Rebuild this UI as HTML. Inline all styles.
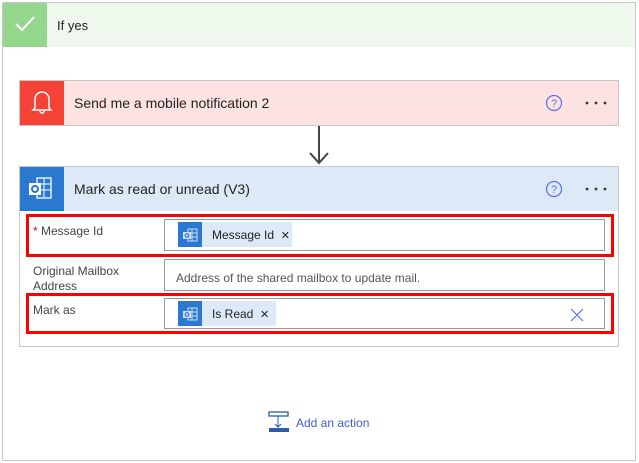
<!DOCTYPE html><html><head><style>
body{margin:0;width:639px;height:463px;background:#fff;font-family:"Liberation Sans",sans-serif;position:relative;overflow:hidden}
.a{position:absolute;box-sizing:border-box}
.t{font-size:13px;color:#222}
</style></head><body>
<div class="a" style="left:2px;top:2px;width:634px;height:459px;border:1px solid #c8c8c8"></div>
<div class="a" style="left:3px;top:3px;width:632px;height:44px;background:#eef8ec"></div>
<div class="a" style="left:3px;top:3px;width:44px;height:44px;background:#92d78c"></div>
<svg class="a" style="left:14px;top:14px" width="22" height="20"><path d="M2 10 L8 16 L20 3" stroke="#fff" stroke-width="2" fill="none"/></svg>
<div class="a t" style="left:57px;top:18px">If yes</div>

<div class="a" style="left:19px;top:80px;width:600px;height:46px;background:#fde2e2;border:1px solid #c8c8c8"></div>
<div class="a" style="left:20px;top:81px;width:44px;height:44px;background:#f44336"></div>
<svg class="a" style="left:30px;top:88px" width="24" height="30"><path d="M5 20 V11 a7 7 0 0 1 14 0 V20 L21 22 H3 Z" stroke="#fff" stroke-width="1.5" fill="none"/><path d="M10 23 a2 2 0 0 0 4 0" stroke="#fff" stroke-width="1.5" fill="none"/></svg>
<div class="a t" style="left:74px;top:95px;font-size:14px">Send me a mobile notification 2</div>
<svg class="a" style="left:545px;top:94px" width="18" height="18"><circle cx="9" cy="9" r="7.5" stroke="#5c6ef0" fill="none" stroke-width="1.2"/><text x="9" y="13" font-size="11" text-anchor="middle" fill="#5c6ef0" font-family="Liberation Sans">?</text></svg>
<svg class="a" style="left:585px;top:101px" width="24" height="4"><circle cx="2" cy="2" r="1.4" fill="#333"/><circle cx="11" cy="2" r="1.4" fill="#333"/><circle cx="20" cy="2" r="1.4" fill="#333"/></svg>

<div class="a" style="left:318px;top:126px;width:2px;height:36px;background:#444"></div>
<svg class="a" style="left:309px;top:152px" width="20" height="14"><path d="M1 1 L10 11 L19 1" stroke="#444" stroke-width="2" fill="none"/></svg>

<div class="a" style="left:19px;top:166px;width:600px;height:181px;border:1px solid #c8c8c8"></div>
<div class="a" style="left:20px;top:167px;width:598px;height:44px;background:#dde9f6"></div>
<div class="a" style="left:20px;top:167px;width:44px;height:44px;background:#2b78d1"></div>
<svg class="a" style="left:26px;top:174px" width="30" height="30"><rect x="11" y="4" width="14" height="20" fill="none" stroke="#fff" stroke-width="1.3"/><path d="M11 10H25M11 16H25M18 4V24" stroke="#fff"/><rect x="3" y="9" width="12" height="12" fill="#fff"/><circle cx="9" cy="15" r="3" fill="none" stroke="#2b78d1" stroke-width="2"/></svg>
<div class="a t" style="left:74px;top:181px;font-size:14px">Mark as read or unread (V3)</div>
<svg class="a" style="left:545px;top:180px" width="18" height="18"><circle cx="9" cy="9" r="7.5" stroke="#5c6ef0" fill="none" stroke-width="1.2"/><text x="9" y="13" font-size="11" text-anchor="middle" fill="#5c6ef0" font-family="Liberation Sans">?</text></svg>
<svg class="a" style="left:585px;top:187px" width="24" height="4"><circle cx="2" cy="2" r="1.4" fill="#333"/><circle cx="11" cy="2" r="1.4" fill="#333"/><circle cx="20" cy="2" r="1.4" fill="#333"/></svg>

<div class="a" style="left:26px;top:214px;width:588px;height:43px;border:3px solid #f00"></div>
<div class="a" style="left:26px;top:293px;width:588px;height:41px;border:3px solid #f00"></div>
<div class="a" style="left:33px;top:224px;font-size:12px;color:#444"><span style="color:#d00">*</span> Message Id</div>
<div class="a" style="left:33px;top:264px;font-size:12px;color:#444;line-height:15px">Original Mailbox<br>Address</div>
<div class="a" style="left:33px;top:303px;font-size:12px;color:#444">Mark as</div>

<div class="a" style="left:164px;top:219px;width:441px;height:32px;border:1px solid #999"></div>
<div class="a" style="left:164px;top:259px;width:441px;height:32px;border:1px solid #999"></div>
<div class="a" style="left:164px;top:298px;width:441px;height:31px;border:1px solid #999"></div>

<div class="a" style="left:178px;top:222px;width:114px;height:25px;background:#dde9f6"></div>
<div class="a" style="left:178px;top:222px;width:24px;height:25px;background:#2b78d1"></div>
<svg class="a" style="left:181px;top:226px" width="18" height="18"><rect x="7" y="3" width="9" height="12" fill="none" stroke="#cfe0f7"/><path d="M7 7H16M7 11H16M11 3V15" stroke="#cfe0f7"/><rect x="2" y="6" width="8" height="7" fill="#cfe0f7"/><circle cx="6" cy="9.5" r="1.8" fill="none" stroke="#2b78d1" stroke-width="1.2"/></svg>
<div class="a" style="left:212px;top:228px;font-size:12px;color:#222">Message Id &nbsp;<span style="font-size:11px">✕</span></div>
<div class="a" style="left:176px;top:271px;font-size:12px;color:#555">Address of the shared mailbox to update mail.</div>
<div class="a" style="left:178px;top:301px;width:98px;height:25px;background:#dde9f6"></div>
<div class="a" style="left:178px;top:301px;width:24px;height:25px;background:#2b78d1"></div>
<svg class="a" style="left:181px;top:305px" width="18" height="18"><rect x="7" y="3" width="9" height="12" fill="none" stroke="#cfe0f7"/><path d="M7 7H16M7 11H16M11 3V15" stroke="#cfe0f7"/><rect x="2" y="6" width="8" height="7" fill="#cfe0f7"/><circle cx="6" cy="9.5" r="1.8" fill="none" stroke="#2b78d1" stroke-width="1.2"/></svg>
<div class="a" style="left:212px;top:307px;font-size:12px;color:#222">Is Read &nbsp;<span style="font-size:11px">✕</span></div>
<svg class="a" style="left:570px;top:308px" width="14" height="14"><path d="M1 1L13 13M13 1L1 13" stroke="#5c6ef0" stroke-width="1.2"/></svg>

<svg class="a" style="left:268px;top:411px" width="22" height="22"><rect x="1" y="1" width="19" height="4" fill="none" stroke="#2a5caa" stroke-width="1.3"/><path d="M10 5V16M7 13L10 16L13 13" stroke="#2a5caa" fill="none"/><rect x="1" y="17" width="20" height="4" fill="#2a5caa"/></svg>
<div class="a" style="left:296px;top:416px;font-size:12px;color:#3b5bdb">Add an action</div>
</body></html>
